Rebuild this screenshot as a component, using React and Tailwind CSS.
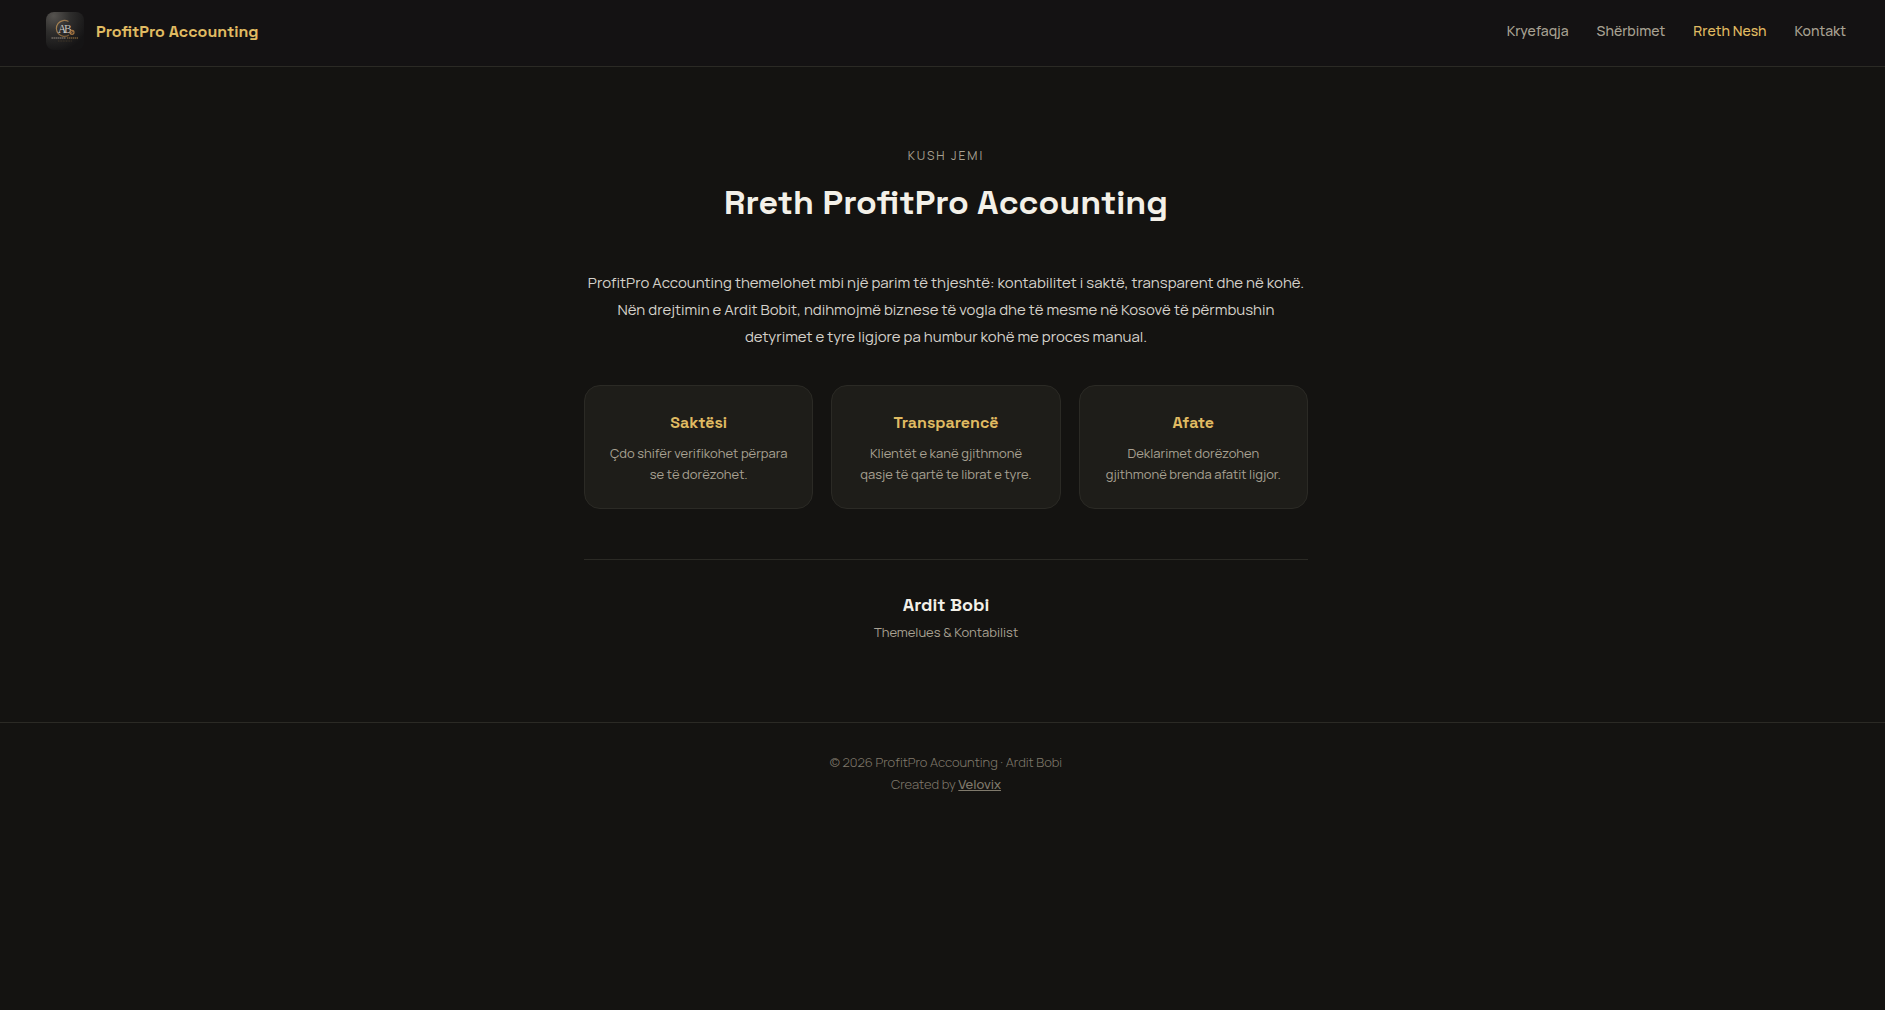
import React from "react";

const navLinks = [
  { label: "Kryefaqja", href: "#kryefaqja" },
  { label: "Shërbimet", href: "#sherbimet" },
  { label: "Rreth Nesh", href: "#rreth-nesh", active: true },
  { label: "Kontakt", href: "#kontakt" },
];

const values = [
  { title: "Saktësi", text: "Çdo shifër verifikohet përpara se të dorëzohet." },
  {
    title: "Transparencë",
    text: "Klientët e kanë gjithmonë qasje të qartë te librat e tyre.",
  },
  { title: "Afate", text: "Deklarimet dorëzohen gjithmonë brenda afatit ligjor." },
];

//small square logo, monogram inside a gold ring
function Logo() {
  return (
    <svg className="h-[38px] w-[38px] rounded-lg" viewBox="0 0 38 38" aria-hidden="true">
      <defs>
        <radialGradient id="logoBg" cx="0.2" cy="0.1" r="0.95">
          <stop offset="0" stopColor="#55524f" />
          <stop offset="0.45" stopColor="#2f2e2d" />
          <stop offset="1" stopColor="#151415" />
        </radialGradient>
        <linearGradient id="logoRing" x1="0" y1="0" x2="1" y2="1">
          <stop offset="0" stopColor="#b08a58" />
          <stop offset="1" stopColor="#6e5230" />
        </linearGradient>
      </defs>
      <rect width="38" height="38" fill="url(#logoBg)" />
      <path
        d="M22.5 9.6A8 8 0 1 0 23 23"
        fill="none"
        stroke="url(#logoRing)"
        strokeWidth="1.2"
      />
      <text x="12" y="20.5" fontSize="11.5" fill="#d0cdc8" fontFamily="Liberation Serif, serif">
        A
      </text>
      <text x="18" y="20.5" fontSize="11.5" fill="#c2bfba" fontFamily="Liberation Serif, serif">
        B
      </text>
      <circle cx="26" cy="20.3" r="2" fill="none" stroke="#a3733f" strokeWidth="1.2" />
      <path d="M24.5 21.8l3-3" stroke="#c08b50" strokeWidth="0.8" />
      <path d="M5.5 26H20" stroke="#77716a" strokeWidth="1.6" strokeDasharray="1.4 0.6" />
      <path d="M21 26h11" stroke="#765b36" strokeWidth="1.6" strokeDasharray="1.4 0.6" />
      <path d="M12 29h14" stroke="#4a3d2c" strokeWidth="0.8" strokeDasharray="1 0.6" />
    </svg>
  );
}

export default function App() {
  return (
    <div className="min-h-screen bg-[#141311] font-['Manrope','Inter',sans-serif] text-[#f3f0e8]">
      <header className="flex items-start justify-between border-b border-[#2b2a25] bg-[#141213] pt-3 pr-[39px] pb-4 pl-[46px]">
        <a href="#kryefaqja" className="flex items-center gap-3">
          <Logo />
          <span className="font-['Space_Grotesk','Inter',sans-serif] text-base leading-[27px] font-semibold text-[#e0bb62]">
            ProfitPro Accounting
          </span>
        </a>
        <nav className="flex h-[38px] items-center gap-7 text-sm font-medium">
          {navLinks.map((link) => (
            <a
              key={link.label}
              href={link.href}
              className={link.active ? "text-[#e0bb62]" : "text-[#a8a192]"}
            >
              {link.label}
            </a>
          ))}
        </nav>
      </header>

      {/* about section */}
      <main className="pt-[81px] pb-[78px] pl-[7px] text-center">
        <div className="mx-auto max-w-[820px] px-12">
          <p className="text-xs leading-4 tracking-[2px] text-[#a8a192] uppercase">Kush jemi</p>
          <h1 className="mt-4 font-['Space_Grotesk','Inter',sans-serif] text-[34px] leading-[46px] font-semibold">
            Rreth ProfitPro Accounting
          </h1>
          <p className="mt-[43px] text-[15px] leading-[27px] text-[#d4d1ca]">
            ProfitPro Accounting themelohet mbi një parim të thjeshtë: kontabilitet i saktë,
            transparent dhe në kohë. Nën drejtimin e Ardit Bobit, ndihmojmë biznese të vogla dhe të
            mesme në Kosovë të përmbushin detyrimet e tyre ligjore pa humbur kohë me proces manual.
          </p>

          <div className="mt-[35px] grid grid-cols-3 gap-[18px]">
            {values.map((item) => (
              <div
                key={item.title}
                className="rounded-2xl border border-[#2b2a25] bg-[#1e1d19] px-6 pt-6 pb-[23px]"
              >
                <h2 className="font-['Space_Grotesk','Inter',sans-serif] text-base leading-[26px] font-semibold text-[#e0bb62]">
                  {item.title}
                </h2>
                <p className="mt-[7px] text-[13px] leading-[21px] text-[#a8a192]">{item.text}</p>
              </div>
            ))}
          </div>

          <div className="mt-[50px] border-t border-[#2b2a25] pt-8">
            <p className="font-['Space_Grotesk','Inter',sans-serif] text-lg leading-[26px] font-semibold">
              Ardit Bobi
            </p>
            <p className="mt-0.5 text-[13px] leading-6 text-[#a8a192]">
              Themelues &amp; Kontabilist
            </p>
          </div>
        </div>
      </main>

      <footer className="border-t border-[#2b2a25] pt-7 pl-[7px] text-center text-[13px] leading-[22px] font-light text-[#807a6c]">
        <p>© 2026 ProfitPro Accounting · Ardit Bobi</p>
        <p>
          Created by{" "}
          <a href="#velovix" className="font-medium underline">
            Velovix
          </a>
        </p>
      </footer>
    </div>
  );
}
